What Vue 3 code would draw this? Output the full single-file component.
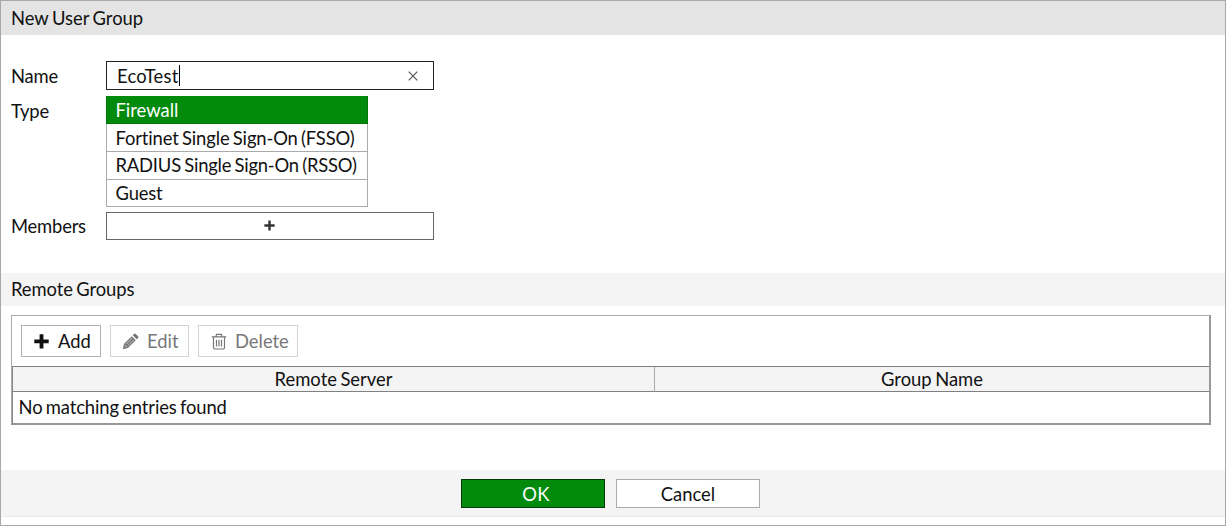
<script setup>
import { ref } from 'vue'

const name = ref('EcoTest')
const selected = ref('Firewall')
const types = [
  { label: 'Firewall', kind: 'firewall' },
  { label: 'Fortinet Single Sign-On (FSSO)', kind: 'fsso' },
  { label: 'RADIUS Single Sign-On (RSSO)', kind: 'rsso' },
  { label: 'Guest', kind: 'guest' },
]
</script>

<template>
  <div class="dialog">
    <header class="title"><span>New User Group</span></header>

    <div class="form">
      <div class="row name-row">
        <label class="label">Name</label>
        <div class="field name-field">
          <span class="value">{{ name }}</span>
          <span class="caret"></span>
          <svg class="clear" width="12" height="12" viewBox="0 0 12 12">
            <path d="M1.7 1.7 10.3 10.3M10.3 1.7 1.7 10.3" />
          </svg>
        </div>
      </div>

      <div class="row type-row">
        <label class="label">Type</label>
        <div class="options">
          <div
            v-for="t in types"
            :key="t.kind"
            class="option"
            :class="[t.kind, { active: t.label === selected }]"
            @click="selected = t.label"
          ><span>{{ t.label }}</span></div>
        </div>
      </div>

      <div class="row members-row">
        <label class="label">Members</label>
        <div class="field members-field">
          <svg width="11" height="11" viewBox="0 0 11 11">
            <path d="M4.3.4h2.4v3.9h3.9v2.4H6.7v3.9H4.3V6.7H.4V4.3h3.9z" />
          </svg>
        </div>
      </div>
    </div>

    <div class="section"><span>Remote Groups</span></div>

    <div class="panel">
      <div class="toolbar">
        <button class="tool add">
          <svg width="15" height="15" viewBox="0 0 15 15">
            <path d="M5.6.3h3.8v5.3h5.3v3.6H9.4v5.4H5.6V9.2H.3V5.6h5.3z" />
          </svg>
          <span>Add</span>
        </button>
        <button class="tool edit">
          <svg width="17" height="17" viewBox="0 0 17 17">
            <path d="M.8 16.2 1.9 11.1 9.8 3.2 13.8 7.2 5.9 15.1zM10.7 2.3 12.1.9Q12.9.2 13.7.9L16.1 3.3Q16.8 4.1 16.1 4.9L14.7 6.3z" />
            <path class="cut" d="M2.6 11.8 5.2 14.4M4.3 11 10.1 5.2M6 12.7 11.8 6.9" />
          </svg>
          <span>Edit</span>
        </button>
        <button class="tool delete">
          <svg width="16" height="17" viewBox="0 0 16 17">
            <path d="M.8 3.9h14.4M4.9 3.8 5.5 1.3h5L11.1 3.8M2.5 4V14.6q0 1.4 1.4 1.4h8.2q1.4 0 1.4-1.4V4M5.5 6.7v6.7M8 6.7v6.7M10.5 6.7v6.7" />
          </svg>
          <span>Delete</span>
        </button>
      </div>
      <div class="grid">
        <div class="cell head server"><span>Remote Server</span></div>
        <div class="cell head group"><span>Group Name</span></div>
        <div class="cell empty"><span>No matching entries found</span></div>
      </div>
    </div>

    <footer class="footer">
      <button class="action ok"><span>OK</span></button>
      <button class="action cancel"><span>Cancel</span></button>
    </footer>
  </div>
</template>

<style>
body { margin: 0; background: #fff; }
</style>

<style scoped>
.dialog, .dialog * { box-sizing: border-box; }
.dialog {
  width: 1226px;
  height: 526px;
  border: 1px solid #a8a8a8;
  background: #fff;
  color: #111;
  font-family: Lato, sans-serif;
  font-size: 18.4px;
  line-height: 22px;
  word-spacing: -1.2px;
  font-variant-ligatures: none;
  display: flex;
  flex-direction: column;
  overflow: hidden;
}
button { font: inherit; padding: 0; margin: 0; border-radius: 0; color: inherit; }
svg { display: block; flex: none; }
span { white-space: nowrap; }

.title {
  height: 34px;
  flex: none;
  padding: 6px 10px 0;
  background: #e4e4e4;
}
.form { height: 238px; flex: none; padding: 26px 10px 0; }
.row { display: flex; align-items: flex-start; }
.label { width: 95px; flex: none; padding-top: 4px; letter-spacing: -0.2px; }
.members-row .label { padding-top: 3px; }
.name-row { height: 35px; }
.type-row { height: 116px; }
.field { width: 328px; height: 29px; display: flex; align-items: center; }
.name-field { border: 1.5px solid #222; padding: 0 14px 0 10px; }
.value { letter-spacing: 0.25px; }
.caret { width: 1px; height: 21px; background: #000; }
.clear { margin-left: auto; fill: none; stroke: #555; stroke-width: 1.2; }
.members-field { height: 28px; border: 1px solid #666; justify-content: center; padding: 0 1px 1px 0; }
.members-field svg { fill: #333; }

.options { width: 262px; display: flex; flex-direction: column; }
.option {
  height: 28px;
  padding: 3px 9px 0 8.5px;
  border: 1px solid #aaa;
  border-top: 0;
}
.option.active { background: #028a0d; border-color: #04750d; color: #fff; }
.option.rsso, .option.guest { padding-top: 2px; }
.option.guest { height: 27px; }
.fsso { letter-spacing: -0.13px; }
.rsso { letter-spacing: -0.2px; }
.guest { letter-spacing: -0.15px; }

.section { height: 33px; flex: none; padding: 5px 10px 0; background: #f4f4f4; letter-spacing: -0.07px; }

.panel {
  width: 1200px;
  height: 110px;
  flex: none;
  margin: 9px 0 0 10px;
  border: 1px solid #aaa;
  border-right: 2px solid #999;
  border-bottom: 2px solid #999;
}
.toolbar { height: 50px; padding: 9px 0 0 9px; display: flex; gap: 9px; }
.tool {
  height: 32px;
  display: flex;
  align-items: center;
  background: #fff;
  border: 1px solid #d2d2d2;
  color: #777;
}
.add { width: 80px; padding-left: 12px; gap: 9px; border: 1px solid #b2b2b2; color: #111; }
.add svg { fill: #111; }
.edit { width: 79px; padding-left: 11px; gap: 8px; }
.edit svg { fill: #777; }
.edit .cut { fill: none; stroke: #fff; stroke-width: .6; }
.delete { width: 100px; padding-left: 12px; gap: 8px; }
.delete svg { fill: none; stroke: #777; stroke-width: 1.2; }

.grid {
  display: grid;
  grid-template-columns: 642px 1fr;
  grid-template-rows: 25px 32px;
  border-top: 1px solid #808080;
  border-left: 1px solid #888;
}
.head { background: #f4f4f4; border-bottom: 1px solid #808080; text-align: center; padding-top: 1px; }
.server { border-right: 1px solid #aaa; }
.empty { grid-column: 1 / 3; padding: 4px 0 0 5.5px; letter-spacing: -0.12px; }

.footer {
  height: 47px;
  flex: none;
  margin-top: 45px;
  padding-top: 9px;
  background: #f4f4f4;
  border-bottom: 1px solid #e9e9e9;
  display: flex;
  justify-content: center;
  gap: 11px;
  padding-right: 5px;
}
.action { width: 144px; height: 29px; border: 1px solid #aaa; background: #fff; color: #111; }
.ok { background: #028a0d; border-color: #063b09; color: #fff; padding-left: 6px; letter-spacing: 0.4px; }
</style>
